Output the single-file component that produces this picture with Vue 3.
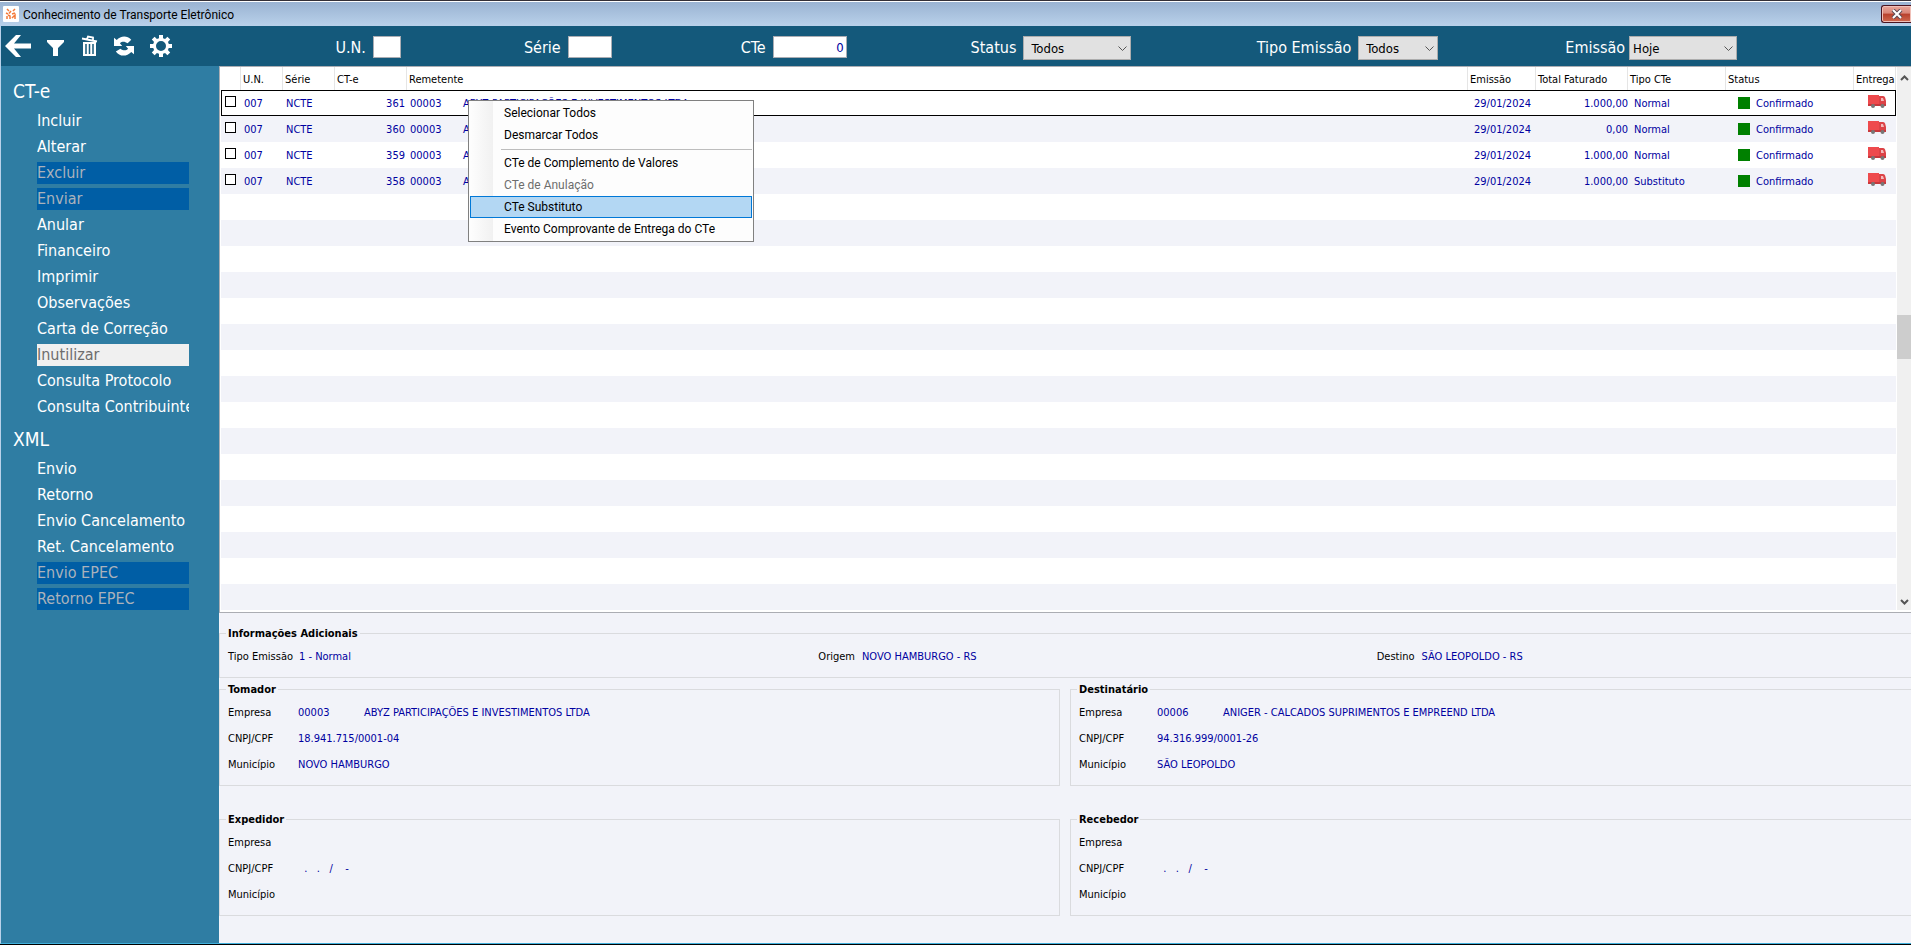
<script setup>
import { ref } from 'vue'

const cteItems = [
  { t: 'Incluir' }, { t: 'Alterar' }, { t: 'Excluir', s: 'off' }, { t: 'Enviar', s: 'off' },
  { t: 'Anular' }, { t: 'Financeiro' }, { t: 'Imprimir' }, { t: 'Observações' },
  { t: 'Carta de Correção' }, { t: 'Inutilizar', s: 'light' }, { t: 'Consulta Protocolo' },
  { t: 'Consulta Contribuinte' },
]
const xmlItems = [
  { t: 'Envio' }, { t: 'Retorno' }, { t: 'Envio Cancelamento' }, { t: 'Ret. Cancelamento' },
  { t: 'Envio EPEC', s: 'off' }, { t: 'Retorno EPEC', s: 'off' },
]
const groups = [
  { title: 'CT-e', items: cteItems },
  { title: 'XML', items: xmlItems },
]
const rows = ref([
  { n: '361', total: '1.000,00', tipo: 'Normal', sel: false },
  { n: '360', total: '0,00', tipo: 'Normal', sel: false },
  { n: '359', total: '1.000,00', tipo: 'Normal', sel: false },
  { n: '358', total: '1.000,00', tipo: 'Substituto', sel: false },
])
const company = 'ABYZ PARTICIPAÇÕES E INVESTIMENTOS LTDA'
const emptyDoc = '  .   .   /    -'
const parties = [
  { title: 'Tomador', code: '00003', name: company, doc: '18.941.715/0001-04', city: 'NOVO HAMBURGO' },
  { title: 'Destinatário', code: '00006', name: 'ANIGER - CALCADOS SUPRIMENTOS E EMPREEND LTDA', doc: '94.316.999/0001-26', city: 'SÃO LEOPOLDO' },
  { title: 'Expedidor', code: '', name: '', doc: emptyDoc, city: '' },
  { title: 'Recebedor', code: '', name: '', doc: emptyDoc, city: '' },
]
</script>

<template>
  <div class="window">
    <header class="titlebar">
      <svg class="logo" viewBox="0 0 16 16" aria-hidden="true">
        <rect width="16" height="16" rx="1" fill="#fff" />
        <path d="M4 3l2 2M12 3l-2 2M8 5L6 7.500M3 7l2 1M12 7l-3 1M4 13v-3M7 13v-3l-2-1M12 13V9l-3 3" fill="none" stroke="#f47a3a" stroke-width="1.500" />
      </svg>
      <h1>Conhecimento de Transporte Eletrônico</h1>
      <button class="close" type="button" aria-label="Fechar">
        <svg viewBox="0 0 12 10" width="12" height="10"><path d="M2 1l8 8M10 1L2 9" stroke="#5b4a55" stroke-width="4" /><path d="M2 1l8 8M10 1L2 9" stroke="#fff" stroke-width="2" /></svg>
      </button>
    </header>

    <div class="toolbar">
      <div class="tools">
        <button type="button" aria-label="Voltar">
          <svg viewBox="0 0 26 22" width="26" height="22"><path d="M0 11L11 0h5L9 8.500h17v5H9L16 22h-5z" fill="#fff" /></svg>
        </button>
        <button type="button" aria-label="Filtrar">
          <svg viewBox="0 0 18 22" width="18" height="22"><path d="M0 5h17v2l-6 6v8H6v-8L0 7z" fill="#fff" /></svg>
        </button>
        <button type="button" aria-label="Excluir">
          <svg viewBox="0 0 17 22" width="17" height="22"><path d="M2 7h13v14H2z" fill="#fff" /><path d="M5 9v10M8.500 9v10M12 9v10" stroke="#14597b" stroke-width="1.500" /><path d="M1 3.500l15 3M6 4l1-2.500 5 1V5" stroke="#fff" stroke-width="1.800" fill="none" /></svg>
        </button>
        <button type="button" aria-label="Atualizar">
          <svg viewBox="0 0 22 22" width="20" height="22"><path d="M0 2v9h9L6.500 8C9 5.500 12 6 15 8l4-4C14-1 7 0 3 4.500z" fill="#fff" /><path d="M22 20v-9h-9l2.500 3C13 16.500 10 16 7 14l-5 3c4 6 12 6 17 .5z" fill="#fff" /></svg>
        </button>
        <button type="button" aria-label="Configurações">
          <svg viewBox="0 0 22 22" width="22" height="22"><circle cx="11" cy="11" r="6.500" fill="none" stroke="#fff" stroke-width="3" /><path d="M11 0v4M11 18v4M0 11h4M18 11h4M3.200 3.200L6 6M16 16l2.800 2.800M3.200 18.800L6 16M16 6l2.800-2.800" stroke="#fff" stroke-width="4" /></svg>
        </button>
      </div>
      <form class="filters">
        <div class="filter"><label for="un">U.N.</label><input id="un" class="w-un" type="text"></div>
        <div class="filter"><label for="serie">Série</label><input id="serie" class="w-serie" type="text"></div>
        <div class="filter"><label for="cte">CTe</label><input id="cte" class="w-cte" type="text" value="0"></div>
        <div class="filter">
          <label for="status">Status</label>
          <span class="combo w-wide"><select id="status"><option>Todos</option></select><svg viewBox="0 0 9 6"><path d="M.5.5l4 4 4-4" /></svg></span>
        </div>
        <div class="filter">
          <label for="tipo">Tipo Emissão</label>
          <span class="combo w-mid"><select id="tipo"><option>Todos</option></select><svg viewBox="0 0 9 6"><path d="M.5.5l4 4 4-4" /></svg></span>
        </div>
        <div class="filter tight">
          <label for="emissao">Emissão</label>
          <span class="combo w-wide near"><select id="emissao"><option>Hoje</option></select><svg viewBox="0 0 9 6"><path d="M.5.5l4 4 4-4" /></svg></span>
        </div>
      </form>
    </div>

    <div class="body">
      <nav class="sidebar">
        <section v-for="g in groups" :key="g.title">
          <h2>{{ g.title }}</h2>
          <ul>
            <li v-for="i in g.items" :key="i.t">
              <button type="button" :class="i.s" :disabled="!!i.s">{{ i.t }}</button>
            </li>
          </ul>
        </section>
      </nav>

      <main>
        <div class="gridbox">
          <table>
            <colgroup>
              <col class="c-check"><col class="c-un"><col class="c-serie"><col class="c-cte"><col>
              <col class="c-date"><col class="c-total"><col class="c-tipo"><col class="c-status"><col class="c-entrega">
            </colgroup>
            <thead>
              <tr>
                <th></th><th>U.N.</th><th>Série</th><th>CT-e</th><th>Remetente</th>
                <th>Emissão</th><th>Total Faturado</th><th>Tipo CTe</th><th>Status</th><th>Entrega</th>
              </tr>
            </thead>
            <tbody>
              <tr v-for="(r, k) in rows" :key="r.n" :class="{ current: k === 0 }">
                <td class="check"><input v-model="r.sel" type="checkbox" :aria-label="'Selecionar CT-e ' + r.n"></td>
                <td>007</td>
                <td>NCTE</td>
                <td class="num">{{ r.n }}</td>
                <td><span class="code">00003</span>{{ company }}</td>
                <td class="date">29/01/2024</td>
                <td class="money">{{ r.total }}</td>
                <td class="tipo">{{ r.tipo }}</td>
                <td class="status"><i></i>Confirmado</td>
                <td class="truck">
                  <svg viewBox="0 0 19 15" width="19" height="15" aria-hidden="true">
                    <path d="M0 1h11v10H0z" fill="#ee4a4d" />
                    <path d="M11 2h4q2 0 2.500 3l.5 2v5h-7z" fill="#dc4347" />
                    <path d="M13 4h2l1 3h-3z" fill="#f3b9ba" />
                    <path d="M0 10h18v2H0z" fill="#c9373b" />
                    <circle cx="5" cy="12" r="2" fill="#777" /><circle cx="14.500" cy="12" r="2" fill="#777" />
                  </svg>
                </td>
              </tr>
              <tr v-for="n in 16" :key="'e' + n"><td v-for="c in 10" :key="c"></td></tr>
            </tbody>
          </table>
          <div class="scroll" aria-hidden="true">
            <svg viewBox="0 0 9 6"><path d="M1 5l3.500-3.500L8 5" /></svg>
            <span class="thumb"></span>
            <svg viewBox="0 0 9 6"><path d="M1 1l3.500 3.500L8 1" /></svg>
          </div>
        </div>

        <div class="details">
          <fieldset class="info">
            <legend>Informações Adicionais</legend>
            <dl>
              <div><dt class="long">Tipo Emissão</dt><dd>1 - Normal</dd></div>
              <div><dt>Origem</dt><dd>NOVO HAMBURGO - RS</dd></div>
              <div><dt>Destino</dt><dd>SÃO LEOPOLDO - RS</dd></div>
            </dl>
          </fieldset>
          <div class="parties">
            <fieldset v-for="p in parties" :key="p.title">
              <legend>{{ p.title }}</legend>
              <dl>
                <div><dt>Empresa</dt><dd><span class="pcode">{{ p.code }}</span>{{ p.name }}</dd></div>
                <div><dt>CNPJ/CPF</dt><dd>{{ p.doc }}</dd></div>
                <div><dt>Município</dt><dd>{{ p.city }}</dd></div>
              </dl>
            </fieldset>
          </div>
        </div>
      </main>
    </div>

    <div class="menu" role="menu">
      <button type="button" role="menuitem">Selecionar Todos</button>
      <button type="button" role="menuitem">Desmarcar Todos</button>
      <hr>
      <button type="button" role="menuitem">CTe de Complemento de Valores</button>
      <button type="button" role="menuitem" disabled>CTe de Anulação</button>
      <button type="button" role="menuitem" class="hot">CTe Substituto</button>
      <button type="button" role="menuitem">Evento Comprovante de Entrega do CTe</button>
    </div>
  </div>
</template>

<style>
body { margin: 0; background: #f2f3f9; }
</style>

<style scoped>
* { box-sizing: border-box; }
.window {
  position: relative;
  display: flex;
  flex-direction: column;
  min-height: 100vh;
  overflow: hidden;
  border-top: 1px solid #332f36;
  border-bottom: 1px solid #000;
  font-family: Tahoma, "DejaVu Sans Condensed", "Open Sans", sans-serif;
  font-size: 11px;
  color: #000;
}
button, input, select { font-family: inherit; }
h1, h2, ul, dl, dd { margin: 0; padding: 0; }

.titlebar {
  display: flex;
  align-items: center;
  height: 25px;
  padding-left: 3px;
  border-top: 1px solid #fff;
  background: linear-gradient(#9ab3d2, #b9d1ea);
}
.logo { width: 16px; height: 16px; }
h1 { flex: 1; margin-left: 4px; padding-top: 2px; font-size: 12px; font-weight: 400; line-height: 16px; }
.titlebar, .menu { font-family: Roboto, "Open Sans", sans-serif; }
.close {
  display: grid;
  place-items: center;
  width: 30px;
  height: 18px;
  padding: 0;
  border: 1px solid #4a1420;
  border-right: 0;
  border-radius: 3px 0 0 3px;
  background: linear-gradient(#e9a79b, #d98577 45%, #b8402c 50%, #cf6a50);
  box-shadow: inset 0 0 0 1px #f0c0b8;
}

.toolbar { display: flex; height: 40px; background: #14597b; border-left: 1px solid #b9d1ea; }
.tools { display: flex; align-items: center; gap: 16px; width: 175px; padding-left: 4px; }
.tools button { padding: 0; border: 0; background: none; line-height: 0; }
.filters {
  flex: 1;
  display: grid;
  grid-template-columns: 225fr 211fr 235fr 285fr 307fr 299fr 174fr;
  padding-top: 10px;
}
.filter { display: flex; justify-content: flex-end; align-items: flex-start; gap: 7px; white-space: nowrap; }
.filter.tight { gap: 4px; }
.filter label { color: #fff; font-size: 16px; line-height: 24px; }
.filter input {
  height: 22px;
  padding: 0 2px;
  border: 1px solid #abadb3;
  background: #fff;
  color: #0000a0;
  font-size: 13px;
  text-align: right;
}
.w-un { width: 28px; }
.w-serie { width: 44px; }
.w-cte { width: 74px; }
.w-wide { width: 108px; }
.w-mid { width: 80px; }
.combo { position: relative; height: 24px; }
.combo select {
  width: 100%;
  height: 24px;
  padding: 0 20px 0 7px;
  border: 1px solid #adadad;
  border-radius: 0;
  background: #e1e1e1;
  color: #000;
  font-size: 13px;
  appearance: none;
}
.combo.near select { padding-left: 3px; }
.combo svg { position: absolute; right: 4px; top: 10px; width: 9px; height: 6px; fill: none; stroke: #555; pointer-events: none; }

.body { flex: 1; display: flex; border-left: 1px solid #b9d1ea; border-bottom: 1px solid #3fb0dc; }
.sidebar { flex: none; width: 218px; padding-top: 4px; background: #2f7da3; color: #fff; }
h2 { height: 40px; padding-left: 12px; font-size: 19px; font-weight: 400; line-height: 42px; }
ul { display: flex; flex-direction: column; gap: 4px; width: 152px; margin-left: 36px; list-style: none; }
li { height: 22px; }
li button {
  display: block;
  width: 100%;
  height: 22px;
  padding: 0;
  border: 0;
  overflow: hidden;
  background: none;
  color: #fff;
  font-size: 16px;
  line-height: 22px;
  text-align: left;
  white-space: nowrap;
}
li button.off { background: #005ea5; color: #aab2bb; }
li button.light { background: #f0f0f0; color: #6d6d6d; }

main { flex: 1; min-width: 0; background: #f2f3f9; }
.gridbox {
  display: flex;
  gap: 1px;
  padding: 0 0 2px 1px;
  border: 1px solid #abadb3;
  border-right: 0;
  background: #fff;
}
table { flex: 1; min-width: 0; table-layout: fixed; border-collapse: separate; border-spacing: 0; }
.c-check { width: 20px; }
.c-un { width: 42px; }
.c-serie { width: 52px; }
.c-cte { width: 72px; }
.c-date { width: 68px; }
.c-total { width: 92px; }
.c-tipo { width: 98px; }
.c-status { width: 128px; }
.c-entrega { width: 42px; }
th {
  height: 23px;
  padding: 2px 0 0 2px;
  border-right: 1px solid #e5e5e5;
  font-weight: 400;
  text-align: left;
  white-space: nowrap;
}
td { height: 26px; padding: 0 0 0 3px; color: #0000a0; white-space: nowrap; overflow: hidden; }
tbody tr:nth-child(even) { background: #f2f3f9; }
tr.current { outline: 1px solid #000; outline-offset: -1px; }
.check { padding: 0 0 3px 4px; line-height: 0; }
.check input {
  appearance: none;
  width: 11px;
  height: 11px;
  margin: 0;
  border: 1px solid #000;
  background: #fff;
}
.check input:checked { background: #0000a0; }
.num { padding: 0 2px 0 0; text-align: right; }
.code { display: inline-block; width: 53px; }
.date { padding-left: 6px; }
.money { padding: 0; text-align: right; }
.tipo { padding-left: 6px; }
.status { padding-left: 12px; }
.status i { display: inline-block; width: 12px; height: 12px; margin-right: 6px; background: #008000; vertical-align: -2px; }
.truck { padding: 0 0 4px 14px; line-height: 0; }
.scroll { display: flex; flex-direction: column; align-items: center; width: 14px; padding: 8px 0 5px; background: #f0f0f0; }
.scroll svg { width: 9px; height: 6px; fill: none; stroke: #555; stroke-width: 2; }
.thumb { width: 14px; height: 44px; margin: 234px 0 auto; background: #cdcdcd; }

.details { padding: 12px 0 26px; }
fieldset { min-width: 0; margin: 0; padding: 2px 0 7px 6px; border: 1px solid #dadbde; }
.info { border-right: 0; }
legend { padding: 0 2px; font-weight: 700; line-height: 17px; }
dl { padding-left: 2px; line-height: 26px; }
dl div { display: flex; height: 26px; }
dt { flex: none; width: 70px; }
dd { color: #0000a0; white-space: pre; }
.info dl { display: grid; grid-template-columns: 590fr 558fr 534fr; }
.info dt { width: auto; margin-right: 7px; }
.info dt.long { width: 71px; margin-right: 0; }
.parties { display: grid; grid-template-columns: 1fr 1fr; gap: 25px 10px; margin-top: 3px; }
.parties fieldset:nth-child(even) { border-right: 0; }
.parties fieldset:nth-child(even) dt { width: 78px; }
.pcode { display: inline-block; width: 66px; }

.menu {
  position: absolute;
  left: 468px;
  top: 99px;
  display: flex;
  flex-direction: column;
  width: 286px;
  padding: 1px;
  border: 1px solid #808080;
  background: linear-gradient(90deg, #fdfdfd 2px, #f1f1f1 24px, #fdfdfd 24px);
}
.menu button {
  height: 22px;
  padding: 0 0 0 33px;
  border: 1px solid transparent;
  background: none;
  color: #000;
  font-size: 12px;
  line-height: 20px;
  text-align: left;
}
.menu button:disabled { color: #6d6d6d; }
.menu button.hot { border-color: #0078d7; background: #b3d7f3; }
.menu hr { width: 251px; height: 1px; margin: 3px 0 2px 31px; border: 0; background: #bdbdbd; }
</style>
